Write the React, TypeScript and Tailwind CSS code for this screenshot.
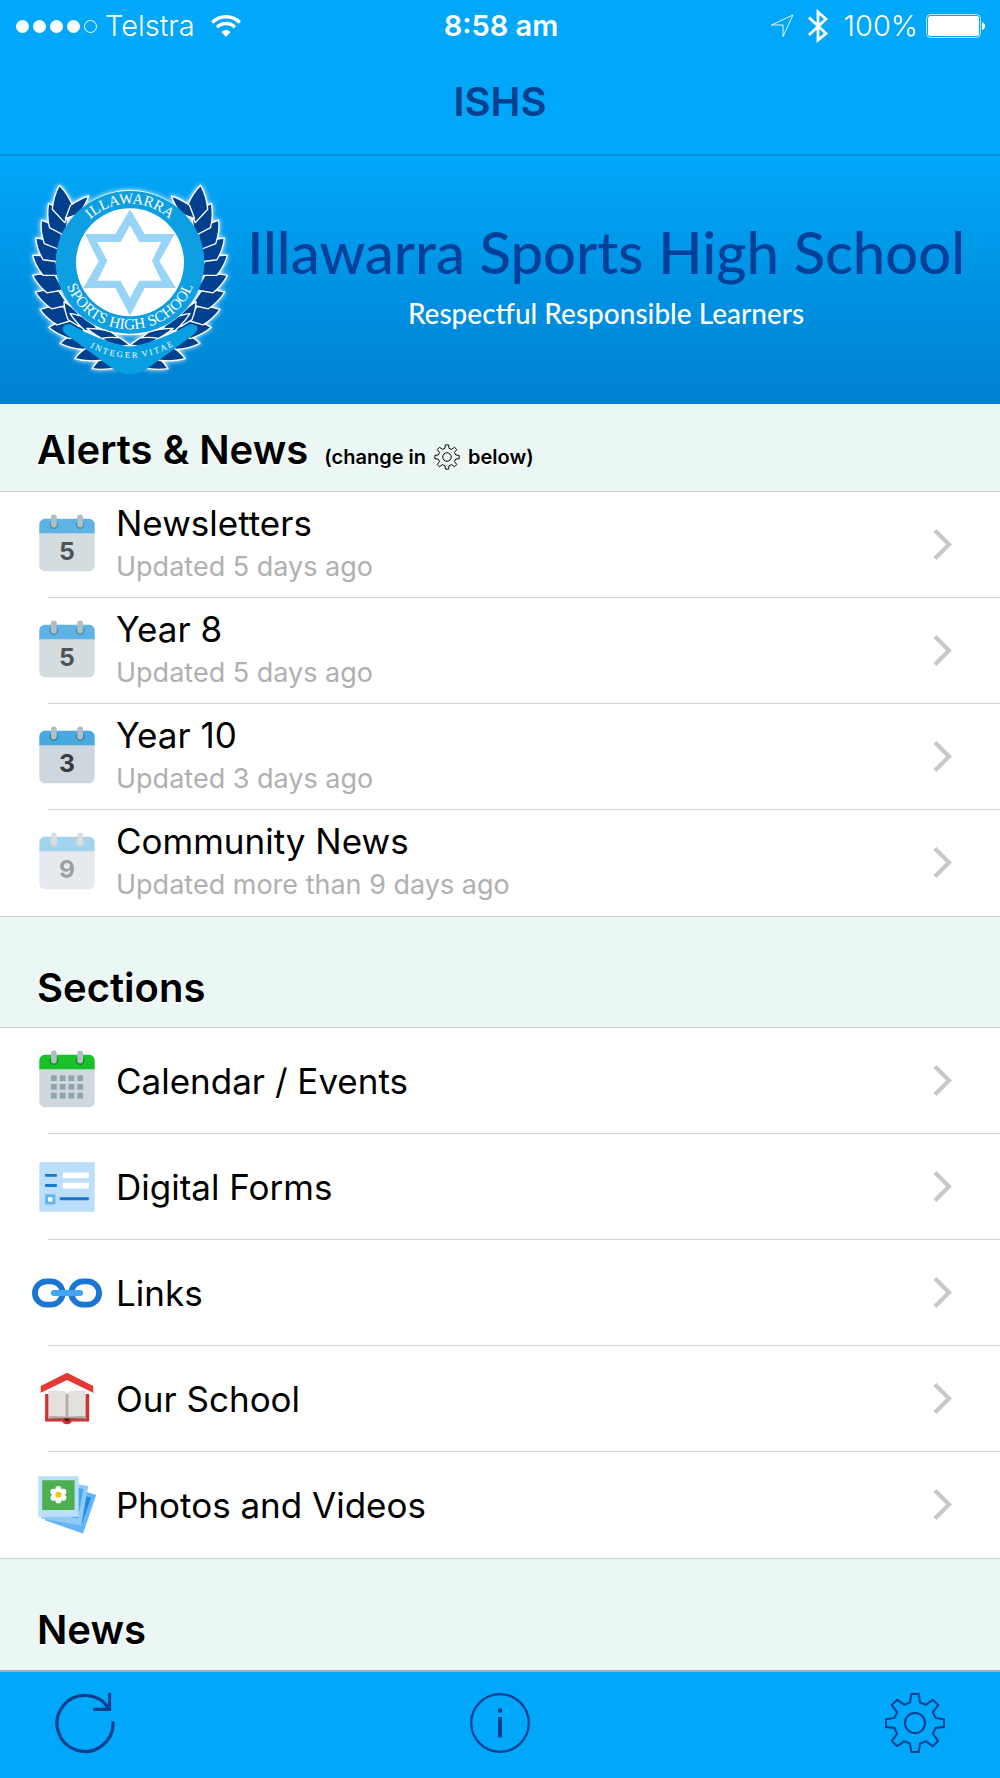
import React from 'react';

type Point = [number, number];

const outerLeaves: [Point, Point, number][] = [
  [[216, 596], [330, 545], 29],
  [[164, 566], [280, 528], 29],
  [[120, 520], [235, 503], 29],
  [[86, 472], [195, 480], 29],
  [[60, 418], [160, 450], 29],
  [[46, 366], [145, 405], 29],
  [[38, 316], [130, 360], 29],
  [[38, 256], [120, 316], 30],
  [[47, 204], [120, 276], 31],
  [[64, 150], [122, 240], 31],
  [[86, 100], [136, 198], 31],
  [[118, 46], [134, 158], 31],
];

const innerLeaves: [Point, Point, number][] = [
  [[206, 78], [136, 146], 18],
  [[132, 395], [178, 470], 18],
  [[150, 430], [240, 490], 18],
  [[200, 475], [310, 515], 16],
  [[245, 505], [330, 525], 14],
];

function leafPath([tip, base, w]: [Point, Point, number]) {
  const dx = base[0] - tip[0];
  const dy = base[1] - tip[1];
  const len = Math.hypot(dx, dy);
  const nx = (-dy / len) * w;
  const ny = (dx / len) * w;
  const at = (t: number, s: number) => `${tip[0] + dx * t + nx * s},${tip[1] + dy * t + ny * s}`;
  return `M${tip[0]},${tip[1]} Q${at(0.25, 0.7)} ${at(0.6, 1)} L${base[0]},${base[1]} L${at(0.6, -1)} Q${at(0.25, -0.7)} ${tip[0]},${tip[1]}Z`;
}

function Wreath() {
  return (
    <>
      {outerLeaves.map((l, i) => (
        <path key={`o${i}`} d={leafPath(l)} />
      ))}
      {innerLeaves.map((l, i) => (
        <path key={`i${i}`} d={leafPath(l)} />
      ))}
    </>
  );
}

function Crest() {
  return (
    <svg
      viewBox="0 0 660 660"
      role="img"
      aria-label="Illawarra Sports High School crest"
      className="h-[220px] w-[220px] shrink-0"
    >
      <defs>
        <path id="crest-top" d="M156,275 A174,174 0 0 1 504,275" />
        <path id="crest-bottom" d="M127,275 A203,203 0 0 0 533,275" />
        <path id="crest-ribbon" d="M190,520 Q330,610 480,516" />
        <filter id="crest-glow" x="-10%" y="-10%" width="120%" height="120%">
          <feDropShadow dx="0" dy="0" stdDeviation="8" floodColor="#fff" floodOpacity="0.9" />
        </filter>
      </defs>
      <g filter="url(#crest-glow)">
        <g fill="#00408f" stroke="#fff" strokeWidth="4" strokeLinejoin="round">
          <Wreath />
          <g transform="translate(660 0) scale(-1 1)">
            <Wreath />
          </g>
        </g>
        <circle cx="330" cy="278" r="218" fill="#fff" />
        <ellipse cx="330" cy="277" rx="223" ry="214" fill="#089fe2" />
      </g>
      <path
        d="M128,480 Q126,462 150,462 Q235,512 330,532 Q425,512 510,462 Q536,462 532,480 Q525,492 510,502 L385,594 Q330,630 275,594 L150,502 Q132,492 128,480Z"
        fill="#089fe2"
      />
      <circle cx="330" cy="277" r="162" fill="#fff" />
      <path
        fillRule="evenodd"
        fill="#98d4f6"
        d="M330,118 374,192 464,192 418,274 468,354 374,354 330,437 286,354 190,354 236,274 195,192 286,192Z M330,166 302,216 232,216 262,272 232,332 302,332 330,384 358,332 424,332 396,272 424,216 358,216Z"
      />
      <g fill="#fff" textAnchor="middle" fontFamily="'Liberation Serif', serif">
        <text fontSize="45">
          <textPath href="#crest-top" startOffset="50%">ILLAWARRA</textPath>
        </text>
        <text fontSize="46">
          <textPath href="#crest-bottom" startOffset="50%">SPORTS HIGH SCHOOL</textPath>
        </text>
        <text fontSize="26">
          <textPath href="#crest-ribbon" startOffset="50%">{'I N T E G E R \u00a0V I T A E'}</textPath>
        </text>
      </g>
    </svg>
  );
}

const iconClass = 'h-[70px] w-[70px] shrink-0';

function CalendarIcon({
  band,
  body,
  ring,
  digit,
  ink,
  faded,
}: {
  band: string;
  body: string;
  ring: string;
  digit?: string;
  ink?: string;
  faded?: boolean;
}) {
  return (
    <svg viewBox="0 0 48 48" aria-hidden="true" className={iconClass} opacity={faded ? 0.5 : 1}>
      <path fill={body} d="M5 38V14h38v24c0 2.200-1.800 4-4 4H9c-2.200 0-4-1.800-4-4z" />
      <path fill={band} d="M43 10v6H5v-6c0-2.200 1.800-4 4-4h30c2.200 0 4 1.800 4 4z" />
      <circle cx="15" cy="10" r="3" fill={ring} />
      <circle cx="33" cy="10" r="3" fill={ring} />
      <rect x="13" y="3" width="4" height="9" rx="2" fill="#b0bec5" />
      <rect x="31" y="3" width="4" height="9" rx="2" fill="#b0bec5" />
      {digit ? (
        <text
          x="24"
          y="34.600"
          textAnchor="middle"
          fontSize="17"
          fontWeight="700"
          fontFamily="Inter, sans-serif"
          fill={ink}
        >
          {digit}
        </text>
      ) : (
        <path
          fill="#90a4ae"
          d="M13 20h4v4h-4zM19 20h4v4h-4zM25 20h4v4h-4zM31 20h4v4h-4zM13 26h4v4h-4zM19 26h4v4h-4zM25 26h4v4h-4zM31 26h4v4h-4zM13 32h4v4h-4zM19 32h4v4h-4zM25 32h4v4h-4zM31 32h4v4h-4z"
        />
      )}
    </svg>
  );
}

function FormIcon() {
  return (
    <svg viewBox="0 0 48 48" aria-hidden="true" className={iconClass}>
      <rect x="5" y="7" width="38" height="34" rx="0.500" fill="#bbdefb" />
      <path fill="#1976d2" d="M9 15h8v2H9zM9 22h8v2H9zM19 31h20v2H19z" />
      <rect x="21" y="14" width="18" height="4" rx="1" fill="#fff" />
      <rect x="21" y="21" width="18" height="4" rx="1" fill="#fff" />
      <rect x="9" y="29" width="7" height="7" fill="#64b5f6" />
      <rect x="11" y="31" width="3" height="3" fill="#fff" />
    </svg>
  );
}

function LinkIcon() {
  return (
    <svg viewBox="0 0 48 48" aria-hidden="true" className={iconClass}>
      <g fill="none" stroke="#1976d2" strokeWidth="4">
        <rect x="2" y="16" width="19" height="16" rx="8" />
        <rect x="27" y="16" width="19" height="16" rx="8" />
      </g>
      <rect x="13" y="22" width="22" height="4" rx="2" fill="#42a5f5" />
    </svg>
  );
}

function SchoolIcon() {
  return (
    <svg viewBox="0 0 48 48" aria-hidden="true" className={iconClass}>
      <path fill="#e53935" d="M24 6 42 15v4.700L24 11 6 19.700V15z" />
      <path fill="#d32f2f" d="M9 20.500h30.200v19H27.200a3.300 2.400 0 0 1-6.400 0H9z" />
      <path fill="#fff" d="M11.200 18h25.600v3H11.200z" />
      <path fill="#e4e0df" d="M11.200 18.500q7-.8 11.800.6 1 .4 1 1.400 0-1 1-1.400 4.800-1.400 11.800-.6v19.200H11.200z" />
      <path fill="#bcaaa4" d="M23 20.500h2v15.500l11.800-.6v2.300H11.200v-2.300l11.800.6z" />
      <path fill="#8d5f58" d="M11.200 37.300 23 36.800h2l11.800.5v.7H11.200z" />
      <path fill="#3e1512" d="M22.200 37.500h3.600v.7q-1.800 2-3.600 0z" />
    </svg>
  );
}

function PhotosIcon() {
  return (
    <svg viewBox="0 0 48 48" aria-hidden="true" className={iconClass}>
      <path fill="#64b5f6" d="M17.500 8.500 44 17.200 35 43.500 8.800 34.500z" />
      <path fill="#1e88e5" d="M17 12 40.500 19 34 37 12 30z" />
      <path fill="#90caf9" d="M11 6.200 38.600 11 33.700 38.100 6.300 33.200z" />
      <path fill="#42a5f5" d="M12 9 35.200 13 31.500 33 10 29z" />
      <path fill="#bbdefb" d="M4.300 4.300h27.700V32H4.300z" />
      <path fill="#4caf50" d="M7 7h22.200v20.400H7z" />
      <g fill="#fff">
        <circle cx="18.100" cy="13.100" r="2.100" />
        <circle cx="18.100" cy="20.900" r="2.100" />
        <circle cx="14.700" cy="15" r="2.100" />
        <circle cx="21.500" cy="15" r="2.100" />
        <circle cx="14.700" cy="19" r="2.100" />
        <circle cx="21.500" cy="19" r="2.100" />
        <circle cx="18.100" cy="17" r="3" />
      </g>
      <circle cx="18.100" cy="17" r="2.100" fill="#ffc107" />
    </svg>
  );
}

function GearIcon({ className, stroke }: { className: string; stroke: number }) {
  return (
    <svg viewBox="-92 -92 184 184" aria-hidden="true" className={className}>
      <g fill="none" stroke="currentColor" strokeWidth={stroke}>
        <path d="M-11-86H11L15-61 32-54 53-69 69-53 53-32 61-15 86-11V12L61 15 53 32 69 53 53 69 32 54 15 61 11 86H-11L-15 61-32 54-53 69-69 53-53 32-61 15-86 12V-11L-61-15-53-32-69-53-53-69-32-54-15-61Z" />
        <circle r="30" />
      </g>
    </svg>
  );
}

function StatusBar() {
  return (
    <div className="grid grid-cols-[1fr_auto_1fr] items-center pt-1 pr-[14px] pl-4 text-[29px] leading-[44px] text-white">
      <div className="flex items-center">
        <div className="flex gap-1" aria-hidden="true">
          <span className="size-[13px] rounded-full bg-white" />
          <span className="size-[13px] rounded-full bg-white" />
          <span className="size-[13px] rounded-full bg-white" />
          <span className="size-[13px] rounded-full bg-white" />
          <span className="size-[13px] rounded-full border border-white" />
        </div>
        <span className="ml-2 font-light">Telstra</span>
        <svg viewBox="0 0 30 22" className="ml-4 h-[22px] w-[30px]" aria-hidden="true">
          <g fill="none" stroke="#fff" strokeWidth="3.400">
            <path d="M1.200 7.500a19.500 19.500 0 0 1 27.600 0" />
            <path d="M6 12.300a12.700 12.700 0 0 1 18 0" />
          </g>
          <path d="M15 22l-4.700-5a6.800 6.800 0 0 1 9.400 0z" fill="#fff" />
        </svg>
      </div>
      <span className="font-semibold">8:58 am</span>
      <div className="flex items-center justify-end">
        <svg viewBox="0 0 24 24" className="h-6 w-6" aria-hidden="true">
          <path d="M23 1 13 22.500V11H1.500z" fill="none" stroke="#fff" strokeWidth="0.900" />
        </svg>
        <svg viewBox="0 0 20 34" className="ml-[14px] h-[34px] w-5" aria-hidden="true">
          <path d="M1 8.500 18 24.500 10 31V3L18 10 1 26" fill="none" stroke="#fff" strokeWidth="2.800" />
        </svg>
        <span className="ml-4 font-light">100%</span>
        <svg viewBox="0 0 60 24" className="ml-2 h-6 w-[60px]" aria-hidden="true">
          <rect x="0.500" y="0.500" width="54" height="23" rx="4" fill="none" stroke="#fff" strokeOpacity="0.700" />
          <rect x="2" y="2" width="51" height="20" rx="2.500" fill="#fff" />
          <path d="M56 8q3 1 3 4t-3 4z" fill="#fff" />
        </svg>
      </div>
    </div>
  );
}

function Row({
  icon,
  title,
  note,
  last,
}: {
  icon: React.ReactNode;
  title: string;
  note?: string;
  last?: boolean;
}) {
  return (
    <li>
      <a href="#" className="flex min-h-[105px] items-center pr-12 pl-8">
        {icon}
        <span className="ml-[14px] flex flex-1 flex-col gap-0.5">
          <span className="text-[35px] leading-[42px] text-black">{title}</span>
          {note && <span className="text-[27px] leading-[42px] text-[#b0b0b0]">{note}</span>}
        </span>
        <svg viewBox="0 0 20 32" className="h-8 w-5" aria-hidden="true">
          <path d="M3 1.500 17 15.500 3 29.500" fill="none" stroke="#c7c7cc" strokeWidth="4.200" />
        </svg>
      </a>
      <div className={last ? 'h-px' : 'ml-12 h-px bg-[#d3d3d5]'} />
    </li>
  );
}

const headingClass = 'text-[40px] leading-[50px] font-semibold text-black [text-shadow:0_2px_0_#fff]';

export default function App() {
  return (
    <div className="flex min-h-screen flex-col bg-white font-[Inter,sans-serif]">
      <header className="border-b-2 border-[#0495dd] bg-[#01a7f9]">
        <StatusBar />
        <h1 className="pt-[29px] pb-[27px] text-center text-[40px] leading-[50px] font-semibold text-[#00408f]">
          ISHS
        </h1>
      </header>

      <div className="flex bg-linear-to-b from-[#01a7f9] to-[#0080d0] px-5 pt-[14px] pb-[14px]">
        <Crest />
        <div className="flex flex-1 flex-col items-center pt-11 pr-2 font-[Lato,sans-serif] font-medium whitespace-nowrap">
          <p className="text-[58px] leading-[76px] text-[#004098]">Illawarra Sports High School</p>
          <p className="text-[28px] leading-[46px] text-white">Respectful Responsible Learners</p>
        </div>
      </div>

      <main className="flex flex-1 flex-col">
        <section>
          <div className="flex items-baseline border-b border-[#c8cfce] bg-[#eaf7f5] px-[37px] pt-[21px] pb-4">
            <h2 className={headingClass}>Alerts &amp; News</h2>
            <p className="ml-4 flex items-center gap-2 text-[20px] leading-[26px] font-semibold text-black [text-shadow:0_2px_0_#fff]">
              (change in
              <GearIcon className="size-[26px]" stroke={7} />
              below)
            </p>
          </div>
          <ul>
            <Row
              icon={<CalendarIcon band="#5eb3e4" body="#d3dcdf" ring="#4594ac" digit="5" ink="#505354" />}
              title="Newsletters"
              note="Updated 5 days ago"
            />
            <Row
              icon={<CalendarIcon band="#5eb3e4" body="#d3dcdf" ring="#4594ac" digit="5" ink="#505354" />}
              title="Year 8"
              note="Updated 5 days ago"
            />
            <Row
              icon={<CalendarIcon band="#48a9e0" body="#ced7de" ring="#2f86a5" digit="3" ink="#3a3c3e" />}
              title="Year 10"
              note="Updated 3 days ago"
            />
            <Row
              icon={<CalendarIcon band="#48a9e0" body="#ced7de" ring="#80b0b8" digit="9" ink="#3f4142" faded />}
              title="Community News"
              note="Updated more than 9 days ago"
              last
            />
          </ul>
        </section>

        <section>
          <div className="border-y border-[#c8cfce] bg-[#eaf7f5] px-[37px] pt-[46px] pb-[14px]">
            <h2 className={headingClass}>Sections</h2>
          </div>
          <ul>
            <Row icon={<CalendarIcon band="#18c128" body="#cfd8dc" ring="#0e8a1e" />} title="Calendar / Events" />
            <Row icon={<FormIcon />} title="Digital Forms" />
            <Row icon={<LinkIcon />} title="Links" />
            <Row icon={<SchoolIcon />} title="Our School" />
            <Row icon={<PhotosIcon />} title="Photos and Videos" last />
          </ul>
        </section>

        <section className="flex-1 border-t border-[#c8cfce] bg-[#eaf7f5] px-[37px] pt-[46px] pb-[14px]">
          <h2 className={headingClass}>News</h2>
        </section>
      </main>

      <nav className="flex items-center justify-between border-t-2 border-[#a4b0b8] bg-[#01a7f9] px-[54px] pt-5 pb-6 text-[#00408f]">
        <button type="button" aria-label="Refresh" className="cursor-pointer">
          <svg viewBox="0 0 62 62" className="size-[62px]" aria-hidden="true">
            <path
              d="M59 30.500A28 28 0 1 1 55 17M55.500 2V17.300H40.500"
              fill="none"
              stroke="currentColor"
              strokeWidth="3.200"
              strokeLinecap="round"
            />
          </svg>
        </button>
        <button type="button" aria-label="Information" className="cursor-pointer">
          <svg viewBox="0 0 62 62" className="size-[62px]" aria-hidden="true">
            <circle cx="31" cy="31" r="28.800" fill="none" stroke="currentColor" strokeWidth="2.200" />
            <path d="M29 16.500h4v4h-4zM29 25h4v20.500h-4z" fill="currentColor" />
          </svg>
        </button>
        <button type="button" aria-label="Settings" className="cursor-pointer">
          <GearIcon className="size-[62px]" stroke={6} />
        </button>
      </nav>
    </div>
  );
}
